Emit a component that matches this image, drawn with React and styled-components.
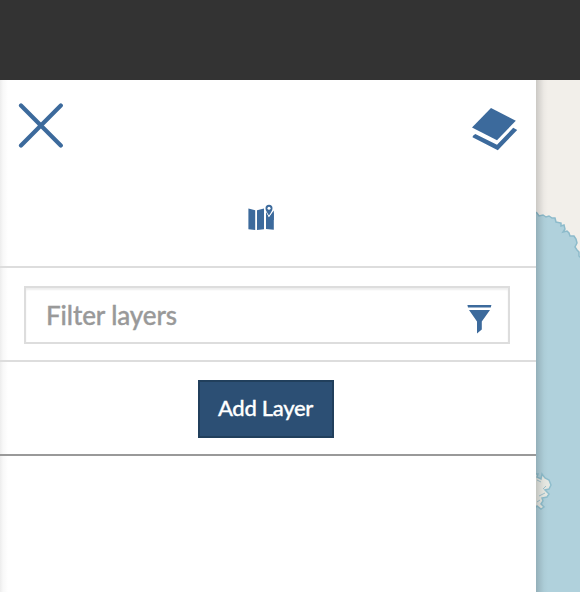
import React from "react";
import styled, { createGlobalStyle } from "styled-components";

const GlobalStyle = createGlobalStyle`
  * { box-sizing: border-box; }
  body { margin: 0; overflow: hidden; font-family: Lato, sans-serif; }
`;

const Page = styled.div`
  display: flex;
  flex-direction: column;
  height: 592px;
  overflow: hidden;
`;

const TopBar = styled.header`
  flex: 0 0 80px;
  background: #333;
`;

const Workspace = styled.main`
  display: flex;
  flex: 1;
  min-height: 0;
`;

const Panel = styled.aside`
  display: flex;
  flex-direction: column;
  width: 536px;
  background: linear-gradient(to right, #ededed 0, #f8f8f8 3px, #fff 8px);
`;

const PanelHeader = styled.div`
  display: flex;
  justify-content: space-between;
  align-items: flex-start;
  height: 92px;
  padding: 22px 18px 0;
`;

const Tabs = styled.nav`
  display: flex;
  justify-content: center;
  height: 96px;
  padding: 31px 14px 0 0;
  border-bottom: 2px solid #ddd;
`;

const IconButton = styled.button`
  display: block;
  width: ${({ $width }) => $width}px;
  height: ${({ $height }) => $height}px;
  margin-top: ${({ $drop = 0 }) => $drop}px;
  padding: 0;
  border: 0;
  background: none;
  color: #3c6a9c;
  svg { display: block; }
`;

const FilterRow = styled.div`
  height: 94px;
  padding: 18px 26px 0 24px;
  border-bottom: 2px solid #ddd;
`;

const FilterField = styled.div`
  display: flex;
  align-items: center;
  height: 58px;
  padding: 0 16px 0 20px;
  border: 2px solid #ddd;
  background: #fff;
  box-shadow: inset 0 2px 2px #eee;
`;

const FilterInput = styled.input`
  flex: 1;
  min-width: 0;
  height: 54px;
  padding: 0;
  border: 0;
  outline: 0;
  background: none;
  font: 500 26px Lato, sans-serif;
  letter-spacing: -0.1px;
  &::placeholder {
    color: #999;
    opacity: 1;
    -webkit-text-stroke: 0.35px #999;
  }
`;

const ActionRow = styled.div`
  display: flex;
  justify-content: center;
  height: 94px;
  padding: 18px 4px 0 0;
  border-bottom: 2px solid #999;
`;

const AddButton = styled.button`
  width: 136px;
  height: 58px;
  padding: 0 1px 4px 0;
  border: 2px solid #213f5c;
  background: #2c4f74;
  color: #fff;
  font: 500 22px Lato, sans-serif;
  letter-spacing: -0.3px;
  -webkit-text-stroke: 0.3px #fff;
  white-space: nowrap;
`;

const MapArea = styled.section`
  position: relative;
  flex: 1;
  background: #f2efea;
  svg { display: block; }
  &::after {
    content: "";
    position: absolute;
    inset: 0 auto 0 0;
    width: 12px;
    background: linear-gradient(to right, rgba(0, 0, 0, 0.16), rgba(0, 0, 0, 0.09) 4px, rgba(0, 0, 0, 0.025) 8px, transparent);
  }
`;

const CloseIcon = () => (
  <svg width="46" height="46" viewBox="18 102 46 46">
    <path d="M21 105.6 60.8 145.4M60.8 105.6 21 145.4" stroke="currentColor" strokeWidth="4.2" strokeLinecap="round" />
  </svg>
);

const LayersIcon = () => (
  <svg width="46" height="46" viewBox="472 106 46 46" fill="currentColor">
    <path d="M491 108 515.8 120.7 497 140.2 472 127.6Z" />
    <path d="M475.3 134 497 144.7 513.2 127.8 517.2 130 497.8 150.2 472.5 137.2 473 135.7Z" />
  </svg>
);

const MapPinIcon = () => (
  <svg width="26" height="28" viewBox="248 203 26 28" fill="currentColor">
    <path d="M248.4 208.4 255.2 210.3V230L248.4 229.2ZM257 210.3 264 208.4V229.2L257 230ZM266 208.6 273.8 210.5V229.8L266 229Z" />
    <path d="M264.8 207H274V212L269.2 218.5 264.8 211Z" fill="#fff" />
    <path d="M266 209.5 268.7 217.5 273.8 210.5V220H266Z" />
    <path d="M269 204.7a3.5 3.5 0 0 1 3.5 3.5c0 2.3-1.6 4.2-3.5 7.2-1.9-3-3.5-4.9-3.5-7.2a3.5 3.5 0 0 1 3.5-3.5Z" stroke="#fff" strokeWidth="1.5" paintOrder="stroke" />
    <circle cx="269" cy="208.3" r="1.5" fill="#fff" />
  </svg>
);

const FilterIcon = () => (
  <svg width="25" height="30" viewBox="467 304 25 30" fill="currentColor">
    <path d="M467.4 305H491.4L490.8 307.5H468ZM469 310H490L481.8 321.4V329.4L477 333.5V321.4Z" />
  </svg>
);

const Coastline = () => (
  <svg width="44" height="512" viewBox="536 80 44 512">
    <path
      d="M534 211 537 213 539 216 543 215 546 217 549 216 552 218 555 218 556 222 561 223 561 226 564 225 565 229 563 232 567 231 569 233 570 236 574 236 576 239 577 243 575 247 577 250 579 252 579 256 582 259V594H534Z"
      fill="#b0d1dc" stroke="#8dbbcb" strokeWidth="1.5"
    />
    <path
      d="M534 474 538 474 537 477 541 479 542 474 545 478 549 480 551 485 549 489 545 490 549 494 547 497 542 498 543 501 541 504 544 507 541 509 537 506 534 509Z"
      fill="#e7e9e3" stroke="#8fbecd" strokeWidth="1.5"
    />
    <path d="M537 480 541 482M543 489 546 486M539 496 545 493M537 502 540 500" stroke="#9fc2cd" strokeWidth="1" fill="none" />
  </svg>
);

export default function App() {
  return (
    <Page>
      <GlobalStyle />
      <TopBar />
      <Workspace>
        <Panel>
          <PanelHeader>
            <IconButton $width={46} $height={46} aria-label="Close"><CloseIcon /></IconButton>
            <IconButton $width={46} $height={46} $drop={4} aria-label="Layers"><LayersIcon /></IconButton>
          </PanelHeader>
          <Tabs>
            <IconButton $width={26} $height={28} aria-label="Map"><MapPinIcon /></IconButton>
          </Tabs>
          <FilterRow>
            <FilterField>
              <FilterInput placeholder="Filter layers" />
              <IconButton $width={25} $height={30} $drop={8} aria-label="Filter"><FilterIcon /></IconButton>
            </FilterField>
          </FilterRow>
          <ActionRow>
            <AddButton>Add Layer</AddButton>
          </ActionRow>
        </Panel>
        <MapArea><Coastline /></MapArea>
      </Workspace>
    </Page>
  );
}
